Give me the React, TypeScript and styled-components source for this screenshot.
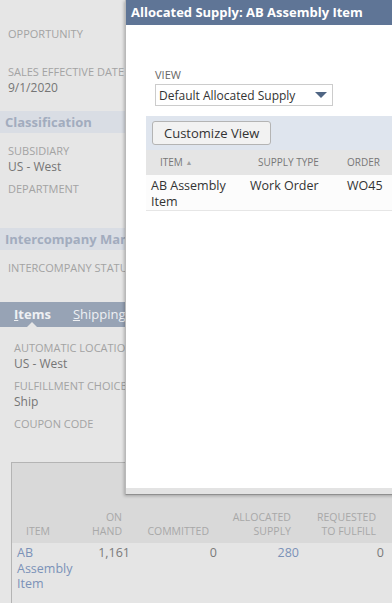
import styled, { createGlobalStyle } from "styled-components";

const GlobalStyle = createGlobalStyle`
  html, body {
    margin: 0;
    padding: 0;
    background: #e6e6e6;
    overflow: hidden;
  }
  body {
    font-family: "Open Sans", "Liberation Sans", sans-serif;
  }
`;

export default function App() {
  return (
    <>
      <GlobalStyle />
      <Page>
        <Form>
          <FieldGroup $top={26}>
            <Field>
              <Label>Opportunity</Label>
              <Value />
            </Field>
            <Field>
              <Label>Sales Effective Date</Label>
              <Value>9/1/2020</Value>
            </Field>
          </FieldGroup>

          <SectionBand>Classification</SectionBand>
          <FieldGroup $top={10}>
            <Field>
              <Label>Subsidiary</Label>
              <Value>US - West</Value>
            </Field>
            <Field>
              <Label>Department</Label>
              <Value />
            </Field>
          </FieldGroup>

          <SectionBand>Intercompany Management</SectionBand>
          <FieldGroup $top={10}>
            <Field>
              <Label>Intercompany Status</Label>
              <Value />
            </Field>
          </FieldGroup>

          <TabBar>
            <Tab $active>
              <u>I</u>tems
            </Tab>
            <Tab>
              <u>S</u>hipping
            </Tab>
            <Tab>
              <u>B</u>illing
            </Tab>
          </TabBar>

          <FieldGroup $top={13} $left={14}>
            <Field>
              <Label>Automatic Location Assignment</Label>
              <Value>US - West</Value>
            </Field>
            <Field>
              <Label>Fulfillment Choice</Label>
              <Value>Ship</Value>
            </Field>
            <Field>
              <Label>Coupon Code</Label>
              <Value />
            </Field>
          </FieldGroup>

          <ItemsBox>
            <ItemsGrid>
              <ItemsHead $left>ITEM</ItemsHead>
              <ItemsHead>
                ON
                <br />
                HAND
              </ItemsHead>
              <ItemsHead>COMMITTED</ItemsHead>
              <ItemsHead>
                ALLOCATED
                <br />
                SUPPLY
              </ItemsHead>
              <ItemsHead>
                REQUESTED
                <br />
                TO FULFILL
              </ItemsHead>
              <ItemsHead />

              <ItemsCell $left $link>
                AB Assembly Item
              </ItemsCell>
              <ItemsCell>1,161</ItemsCell>
              <ItemsCell>0</ItemsCell>
              <ItemsCell $link>280</ItemsCell>
              <ItemsCell>0</ItemsCell>
              <ItemsCell />
            </ItemsGrid>
          </ItemsBox>
        </Form>

        <Modal>
          <ModalHeader>Allocated Supply: AB Assembly Item</ModalHeader>
          <ModalBody>
            <ViewField>
              <ViewLabel>VIEW</ViewLabel>
              <Select>
                <span>Default Allocated Supply</span>
                <Caret />
              </Select>
            </ViewField>

            <Toolbar>
              <Button>Customize View</Button>
            </Toolbar>

            <SupplyGrid>
              <SupplyHead $pad={14}>
                ITEM <Sort>▲</Sort>
              </SupplyHead>
              <SupplyHead $pad={13}>SUPPLY TYPE</SupplyHead>
              <SupplyHead $pad={5}>ORDER</SupplyHead>

              <SupplyCell>AB Assembly Item</SupplyCell>
              <SupplyCell>Work Order</SupplyCell>
              <SupplyCell>WO45</SupplyCell>
            </SupplyGrid>
          </ModalBody>
          <ModalFooter />
        </Modal>
      </Page>
    </>
  );
}

const Page = styled.div`
  position: relative;
  width: 392px;
  height: 603px;
  overflow: hidden;
  background: #e6e6e6;
`;

const Form = styled.div`
  display: flex;
  flex-direction: column;
`;

const FieldGroup = styled.div<{ $top: number; $left?: number }>`
  display: flex;
  flex-direction: column;
  gap: 6px;
  padding: ${(p) => p.$top}px 0 15px ${(p) => p.$left ?? 8}px;
`;

const Field = styled.div`
  display: flex;
  flex-direction: column;
  white-space: nowrap;
`;

const Label = styled.div`
  font-size: 11px;
  line-height: 16px;
  text-transform: uppercase;
  color: #a3a3a3;
`;

const Value = styled.div`
  font-size: 12px;
  line-height: 16px;
  min-height: 16px;
  color: #757575;
`;

const SectionBand = styled.div`
  height: 22px;
  padding-left: 5px;
  background: #d9dde4;
  color: #a2acbe;
  font-size: 13px;
  font-weight: 700;
  line-height: 22px;
  white-space: nowrap;
`;

const TabBar = styled.div`
  display: flex;
  gap: 22px;
  height: 25px;
  margin-top: -5px;
  padding-left: 14px;
  background: #97a3b5;
  align-items: center;
`;

const Tab = styled.div<{ $active?: boolean }>`
  position: relative;
  font-size: 13px;
  font-weight: ${(p) => (p.$active ? 700 : 400)};
  color: #eef0f3;
  line-height: 25px;

  &::after {
    content: "";
    display: ${(p) => (p.$active ? "block" : "none")};
    position: absolute;
    left: 50%;
    bottom: 0;
    margin-left: -5px;
    border-left: 5px solid transparent;
    border-right: 5px solid transparent;
    border-bottom: 5px solid #e6e6e6;
  }
`;

const ItemsBox = styled.div`
  margin: -1px 0 0 11px;
  border-top: 1px solid #b4b4b4;
  border-left: 1px solid #b4b4b4;
  background: #d9d9d9;
`;

const ItemsGrid = styled.div`
  display: grid;
  grid-template-columns: 76px 47px 87px 82px 85px 1fr;
`;

const ItemsHead = styled.div<{ $left?: boolean }>`
  height: 80px;
  box-sizing: border-box;
  display: flex;
  flex-direction: column;
  justify-content: flex-end;
  padding: 0 ${(p) => (p.$left ? 0 : 13)}px 5px ${(p) => (p.$left ? 14 : 0)}px;
  text-align: ${(p) => (p.$left ? "left" : "right")};
  font-size: 10.5px;
  line-height: 14px;
  color: #a8a8a8;
  white-space: nowrap;
`;

const ItemsCell = styled.div<{ $left?: boolean; $link?: boolean }>`
  background: #e5e5e5;
  padding: 2px 5px 40px;
  text-align: ${(p) => (p.$left ? "left" : "right")};
  font-size: 12.5px;
  line-height: 15.5px;
  color: ${(p) => (p.$link ? "#7b92b8" : "#7a7a7a")};
`;

const Modal = styled.div`
  position: absolute;
  left: 125px;
  top: 0;
  width: 300px;
  height: 494px;
  display: flex;
  flex-direction: column;
  background: #ffffff;
  border-left: 1px solid #b9b9b9;
  border-bottom: 1px solid #8f8f8f;
  box-shadow: -1px 1px 3px rgba(0, 0, 0, 0.25);
`;

const ModalHeader = styled.div`
  height: 25px;
  flex-shrink: 0;
  padding-left: 5px;
  background: #5f7596;
  color: #ffffff;
  font-size: 13px;
  font-weight: 700;
  line-height: 25px;
  white-space: nowrap;
`;

const ModalBody = styled.div`
  flex: 1;
  padding: 42px 0 0 20px;
`;

const ModalFooter = styled.div`
  height: 6px;
  background: #e3e3e3;
`;

const ViewField = styled.div`
  display: flex;
  flex-direction: column;
  gap: 1px;
  padding-left: 9px;
`;

const ViewLabel = styled.div`
  font-size: 11px;
  line-height: 16px;
  color: #666666;
`;

const Select = styled.div`
  width: 178px;
  height: 22px;
  box-sizing: border-box;
  display: flex;
  align-items: center;
  justify-content: space-between;
  padding: 0 5px 0 3px;
  border: 1px solid #cccccc;
  font-size: 12px;
  color: #333333;
  white-space: nowrap;
`;

const Caret = styled.span`
  width: 0;
  height: 0;
  border-left: 6px solid transparent;
  border-right: 6px solid transparent;
  border-top: 6px solid #4f6583;
`;

const Toolbar = styled.div`
  margin-top: 10px;
  padding: 5px 6px;
  background: #dfe5ee;
`;

const Button = styled.button`
  height: 24px;
  padding: 0 11px;
  border: 1px solid #b4b4b4;
  border-radius: 3px;
  background: #f2f2f2;
  font-family: inherit;
  font-size: 13px;
  color: #333333;
`;

const SupplyGrid = styled.div`
  display: grid;
  grid-template-columns: 99px 97px 1fr;
`;

const SupplyHead = styled.div<{ $pad: number }>`
  height: 25px;
  padding-left: ${(p) => p.$pad}px;
  background: #e5e5e5;
  font-size: 10px;
  line-height: 25px;
  color: #777777;
  white-space: nowrap;
`;

const Sort = styled.span`
  font-size: 7px;
  color: #a0a0a0;
  vertical-align: 1px;
`;

const SupplyCell = styled.div`
  padding: 3px 8px 0 5px;
  background: #fcfcfc;
  border-bottom: 1px solid #e6e6e6;
  font-size: 12.5px;
  line-height: 16px;
  color: #333333;
`;
